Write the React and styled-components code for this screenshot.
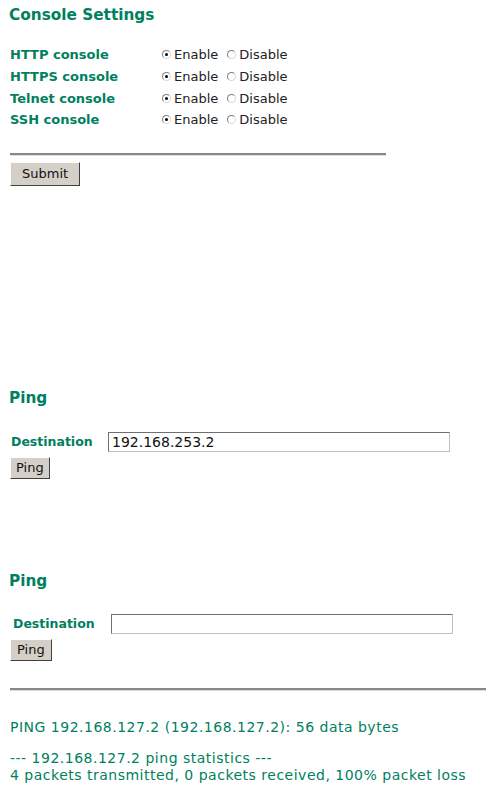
import React from "react";
import styled, { createGlobalStyle } from "styled-components";

const GlobalStyle = createGlobalStyle`
  body {
    margin: 0;
    background: #fff;
    font-family: "DejaVu Sans", Verdana, sans-serif;
    color: #00805e;
  }
`;

const Page = styled.div`
  width: 498px;
  height: 804px;
  padding: 0 10px;
  box-sizing: border-box;
  overflow: hidden;
`;

const Title = styled.h2`
  margin: ${props => props.top || "5px"} 0 0 -1px;
  font-size: 15.3px;
  font-weight: bold;
  color: #00805e;
  height: 20px;
  line-height: 20px;
`;

const Grid = styled.div`
  display: grid;
  grid-template-columns: 150px auto;
  grid-auto-rows: 21.7px;
  align-items: center;
  margin-top: 19px;
`;

const Label = styled.div`
  font-size: 13px;
  font-weight: bold;
  color: #00805e;
`;

const Options = styled.div`
  display: flex;
  align-items: center;
  font-family: "DejaVu Sans", Tahoma, sans-serif;
  font-size: 13px;
  color: #222;
`;

const Dot = styled.span`
  width: 9px;
  height: 9px;
  border-radius: 50%;
  border: 1px solid #808080;
  border-bottom-color: #d8d8d8;
  border-right-color: #d8d8d8;
  box-sizing: border-box;
  margin: 0 3px 0 ${props => props.gap || "2px"};
  display: inline-flex;
  align-items: center;
  justify-content: center;
  &::after {
    content: "";
    width: 3px;
    height: 3px;
    border-radius: 50%;
    background: ${props => (props.on ? "#000" : "transparent")};
  }
`;

const Rule = styled.div`
  width: ${props => props.width};
  height: 2px;
  background: #888;
  border-bottom: 1px solid #ddd;
  margin-top: ${props => props.top};
`;

const Button = styled.button`
  display: block;
  font-family: "DejaVu Sans", Tahoma, sans-serif;
  font-size: 13px;
  color: #111;
  background: #d4d0c8;
  border: 1px solid;
  border-color: #fff #404040 #404040 #fff;
  padding: 0 ${props => props.pad || "4px"};
  height: ${props => props.h || "22px"};
  margin-top: ${props => props.top || "0"};
`;

const DestRow = styled.div`
  display: flex;
  align-items: center;
  margin-top: ${props => props.top};
  margin-left: ${props => props.left || "1px"};
`;

const DestLabel = styled(Label)`
  width: ${props => props.w};
  font-size: 12.5px;
`;

const Field = styled.div`
  width: 342px;
  height: 20px;
  box-sizing: border-box;
  border: 1px solid #c0c0c0;
  border-top-color: #707070;
  border-left-color: #707070;
  font-family: "DejaVu Sans", Tahoma, sans-serif;
  font-size: 14px;
  color: #111;
  line-height: 18px;
  padding-left: 3px;
`;

const Output = styled.div`
  font-size: 14px;
  letter-spacing: 0.5px;
  color: #00805e;
  line-height: 16.5px;
  margin-top: ${props => props.top || "0"};
`;

const rows = ["HTTP console", "HTTPS console", "Telnet console", "SSH console"];

function Destination({ value, top, labelW, left }) {
  return (
    <DestRow top={top} left={left}>
      <DestLabel w={labelW}>Destination</DestLabel>
      <Field>{value}</Field>
    </DestRow>
  );
}

export default function App() {
  return (
    <Page>
      <GlobalStyle />
      <Title>Console Settings</Title>
      <Grid>
        {rows.map(r => (
          <React.Fragment key={r}>
            <Label>{r}</Label>
            <Options>
              <Dot on />Enable
              <Dot gap="9px" />Disable
            </Options>
          </React.Fragment>
        ))}
      </Grid>
      <Rule width="376px" top="22px" />
      <Button top="6px" pad="11px" h="24px">Submit</Button>

      <Title top="202px">Ping</Title>
      <Destination value="192.168.253.2" top="24px" labelW="97px" />
      <Button top="5px" pad="5px">Ping</Button>

      <Title top="92px">Ping</Title>
      <Destination value="" top="23px" labelW="98px" left="3px" />
      <Button top="5px" pad="6px">Ping</Button>

      <Rule width="476px" top="27px" />
      <Output top="28px">PING 192.168.127.2 (192.168.127.2): 56 data bytes</Output>
      <Output top="15px">
        --- 192.168.127.2 ping statistics ---
        <br />
        4 packets transmitted, 0 packets received, 100% packet loss
      </Output>
    </Page>
  );
}
